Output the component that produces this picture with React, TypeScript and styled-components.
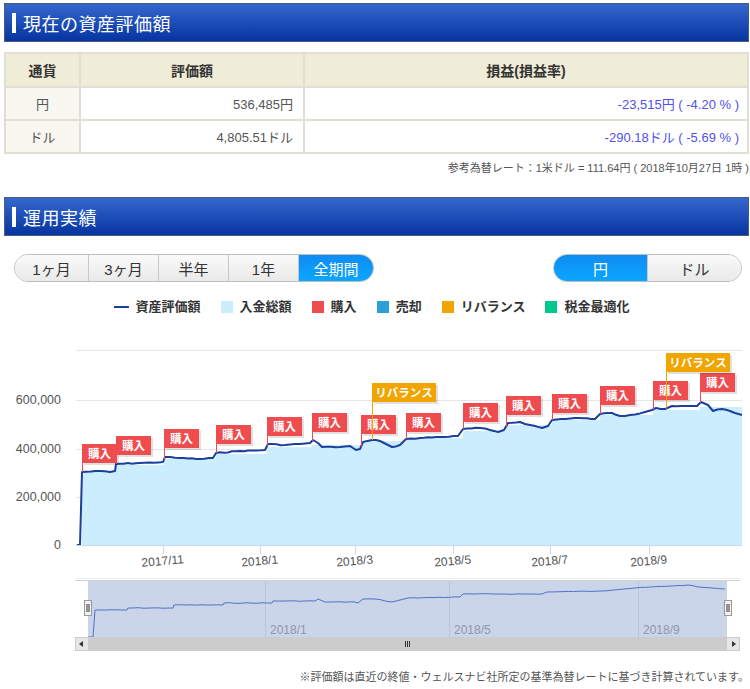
import styled, { createGlobalStyle } from 'styled-components'

const GlobalStyle = createGlobalStyle`
  body {
    margin: 0;
    background: #fff;
    font-family: 'Liberation Sans', 'Noto Sans CJK JP', sans-serif;
    color: #333;
  }
`

const Page = styled.div`
  width: 745px;
  padding: 3px 1px 0 4px;
`

const SectionHeader = styled.div`
  height: 37px;
  border: 1px solid #4d5a78;
  background: linear-gradient(#3568cf, #0634a0);
  display: flex;
  align-items: center;
  padding-left: 7px;
`

const HeaderBar = styled.span`
  width: 4px;
  height: 20px;
  background: #fff;
  margin-right: 7px;
`

const HeaderTitle = styled.h2`
  margin: 0;
  font-size: 18px;
  font-weight: normal;
  color: #fff;
  letter-spacing: 0.5px;
`

const Table = styled.table`
  margin-top: 10px;
  width: 745px;
  border-collapse: collapse;
  font-size: 13px;
`

const Th = styled.th<{ $w?: number }>`
  ${p => (p.$w ? `width: ${p.$w}px;` : '')}
  height: 32px;
  padding: 0;
  background: #efecd7;
  border: 2px solid #e1ded3;
  font-size: 14px;
  font-weight: bold;
  color: #333;
`

const Td = styled.td<{ $kind?: 'label' | 'num' | 'loss' }>`
  height: 31px;
  border: 2px solid #e1ded3;
  padding: 0 ${p => (p.$kind === 'num' ? 10 : 8)}px 0 8px;
  text-align: ${p => (p.$kind === 'label' ? 'center' : 'right')};
  background: ${p => (p.$kind === 'label' ? '#f8f8f1' : '#fff')};
  color: ${p => (p.$kind === 'loss' ? '#5050f0' : '#555')};
`

const Note = styled.div<{ $top: number }>`
  margin-top: ${p => p.$top}px;
  text-align: right;
  font-size: 11px;
  line-height: 16px;
  color: #555;
  white-space: nowrap;
`

const Spacer = styled.div<{ $h: number }>`
  height: ${p => p.$h}px;
`

const Controls = styled.div`
  margin-top: 18px;
  display: flex;
  justify-content: space-between;
  padding: 0 7px 0 10px;
`

const Segmented = styled.div`
  display: flex;
  height: 28px;
  border: 1px solid #bdbdbd;
  border-radius: 15px;
  overflow: hidden;
  box-sizing: border-box;
`

const Segment = styled.div<{ $w: number; $active?: boolean }>`
  width: ${p => p.$w}px;
  display: flex;
  align-items: center;
  justify-content: center;
  font-size: 15px;
  color: ${p => (p.$active ? '#fff' : '#333')};
  background: ${p =>
    p.$active ? 'linear-gradient(#0f8cf2, #0aa6ff)' : 'linear-gradient(#fafafa, #e9e9e9)'};
  & + & {
    border-left: 1px solid #c8c8c8;
  }
`

const Legend = styled.div`
  margin-top: 17px;
  display: flex;
  justify-content: center;
  gap: 20px;
  padding-right: 10px;
  font-size: 13px;
  font-weight: bold;
  color: #333;
  line-height: 15px;
`

const LegendItem = styled.div`
  display: flex;
  align-items: center;
  gap: 7px;
`

const Swatch = styled.span<{ $color: string; $line?: boolean }>`
  display: inline-block;
  width: ${p => (p.$line ? 15 : 12)}px;
  height: ${p => (p.$line ? 2 : 12)}px;
  background: ${p => p.$color};
`

const ChartSvg = styled.svg`
  display: block;
  font-family: 'Liberation Sans', 'Noto Sans CJK JP', sans-serif;
`

const Footer = styled.div`
  margin-top: 14px;
  text-align: right;
  font-size: 11px;
  line-height: 16px;
  color: #555;
`

// chart data in page pixel coordinates
const linePts: [number, number][] = [
  [77, 545], [80, 545], [82, 472], [100, 471], [110, 472], [115, 471], [116, 464], [140, 463],
  [163, 462], [165, 457], [180, 458], [200, 459], [213, 458], [216, 453], [240, 451], [265, 450],
  [268, 444], [285, 445], [300, 444], [310, 443], [313, 440], [318, 443], [322, 447], [340, 447],
  [350, 446], [356, 450], [360, 449], [363, 442], [372, 440], [380, 441], [388, 445], [392, 447],
  [400, 445], [406, 439], [420, 438], [440, 437], [458, 436], [463, 429], [480, 428], [490, 430],
  [498, 432], [504, 430], [508, 423], [520, 422], [530, 425], [542, 428], [548, 426], [552, 420],
  [575, 418], [595, 419], [600, 414], [612, 413], [620, 416], [630, 415], [645, 412], [652, 410],
  [656, 408], [665, 409], [672, 406], [690, 406], [697, 406], [701, 402], [708, 405], [713, 411],
  [722, 409], [730, 411], [735, 413], [742, 415]
]

const deposits: [number, number][] = [
  [82, 472], [116, 465], [164, 459], [216, 454], [267, 447], [312, 445], [361, 441], [406, 438],
  [463, 431], [506, 425], [552, 420], [600, 415], [653, 410], [700, 407]
]

const purchases: [number, number][] = [
  [82, 444], [116, 436], [164, 429], [216, 425], [267, 417], [312, 413], [361, 415], [406, 413],
  [463, 403], [506, 396], [552, 394], [600, 386], [653, 381], [700, 373]
]

const rebalances: [number, number][] = [
  [372, 383], [666, 353]
]

const navPts: [number, number][] = [
  [88, 637], [93, 637], [95, 610], [127, 610], [128, 608], [173, 608], [174, 605], [223, 605],
  [224, 603], [272, 603], [273, 601], [315, 601], [318, 599], [325, 602], [355, 602], [358, 603],
  [363, 599], [375, 599], [392, 602], [408, 598], [460, 597], [463, 594], [502, 594], [542, 594],
  [547, 592], [600, 591], [635, 588], [688, 585], [698, 587], [712, 588], [725, 589]
]

function jitter(pts: [number, number][], amp: number, step: number) {
  const out: [number, number][] = []
  let seed = 7
  const rnd = () => {
    seed = (seed * 9301 + 49297) % 233280
    return seed / 233280 - 0.5
  }
  for (let i = 0; i < pts.length - 1; i++) {
    const [x0, y0] = pts[i]
    const [x1, y1] = pts[i + 1]
    out.push([x0, y0])
    const dx = x1 - x0
    if (dx > step * 1.5 && Math.abs(y1 - y0) < 4) {
      const n = Math.floor(dx / step)
      for (let k = 1; k < n; k++) {
        const t = k / n
        out.push([x0 + dx * t, y0 + (y1 - y0) * t + rnd() * amp])
      }
    }
  }
  out.push(pts[pts.length - 1])
  return out
}

const toPath = (pts: [number, number][]) =>
  pts.map((p, i) => `${i ? 'L' : 'M'}${p[0].toFixed(1)},${p[1].toFixed(1)}`).join(' ')

const lineAt = (x: number) => {
  for (let i = 0; i < linePts.length - 1; i++) {
    const [x0, y0] = linePts[i]
    const [x1, y1] = linePts[i + 1]
    if (x >= x0 && x <= x1) return y0 + ((y1 - y0) * (x - x0)) / (x1 - x0 || 1)
  }
  return 545
}

const depositPath = () => {
  let d = 'M82,545'
  deposits.forEach(([x, y], i) => {
    d += ` L${x},${y}`
    const next = i < deposits.length - 1 ? deposits[i + 1][0] : 742
    d += ` L${next},${y}`
  })
  return d + ' L742,545 Z'
}

const Flag = ({ x, y, label, color, w }: { x: number; y: number; label: string; color: string; w: number }) => (
  <g>
    <rect x={x + 2} y={y + 2} width={w} height={19} fill="rgba(0,0,0,0.12)" />
    <line x1={x + 0.5} y1={y + 19} x2={x + 0.5} y2={lineAt(x)} stroke={color} strokeWidth={1} />
    <rect x={x} y={y} width={w} height={19} fill={color} />
    <text x={x + w / 2} y={y + 14} fill="#fff" fontSize={11.5} fontWeight="bold" textAnchor="middle">
      {label}
    </text>
  </g>
)

const yLabels: [string, number][] = [['600,000', 400], ['400,000', 449], ['200,000', 497], ['0', 545]]
const xLabels: [string, number][] = [
  ['2017/11', 163], ['2018/1', 260], ['2018/3', 355], ['2018/5', 453], ['2018/7', 550], ['2018/9', 649]
]
const navLabels: [string, number][] = [['2018/1', 265], ['2018/5', 449], ['2018/9', 638]]

const Chart = () => {
  const mainLine = jitter(linePts, 1.0, 4)
  const navLine = jitter(navPts, 0.6, 5)
  return (
    <ChartSvg width={745} height={341} viewBox="4 314 745 341">
      {[350, 400, 449, 497].map(y => (
        <line key={y} x1={76} x2={742} y1={y + 0.5} y2={y + 0.5} stroke="#e6e6e6" strokeWidth={1} />
      ))}
      {yLabels.map(([t, y]) => (
        <text key={t} x={61} y={y + 4} fontSize={12.5} fill="#555" textAnchor="end">
          {t}
        </text>
      ))}
      <path d={depositPath()} fill="#ccedfd" />
      <path d={toPath(mainLine)} fill="none" stroke="#1b3f9c" strokeWidth={2} strokeLinejoin="round" />
      <line x1={76} x2={742} y1={545.5} y2={545.5} stroke="#ccd6eb" strokeWidth={1} />
      {xLabels.map(([t, x]) => (
        <g key={t}>
          <line x1={x + 0.5} x2={x + 0.5} y1={546} y2={554} stroke="#ccd6eb" />
          <text
            x={x}
            y={565}
            fontSize={12}
            fill="#555"
            textAnchor="middle"
            transform={`rotate(-5 ${x} 565)`}
          >
            {t}
          </text>
        </g>
      ))}
      {purchases.map(([x, y]) => (
        <Flag key={x} x={x} y={y} label="購入" color="#ee4c4f" w={35} />
      ))}
      {rebalances.map(([x, y]) => (
        <Flag key={x} x={x} y={y} label="リバランス" color="#f0a500" w={64} />
      ))}
      <line x1={76} x2={742} y1={578.5} y2={578.5} stroke="#ececec" />

      {/* navigator */}
      <line x1={75} x2={740} y1={580.5} y2={580.5} stroke="#d0d0d0" />
      <rect x={88} y={581} width={639} height={56} fill="#cbd5ea" />
      {navLabels.map(([t, x]) => (
        <g key={t}>
          <line x1={x + 0.5} x2={x + 0.5} y1={581} y2={637} stroke="#b9c5de" />
          <text x={x + 5} y={634} fontSize={12} fill="#8f97a8">
            {t}
          </text>
        </g>
      ))}
      <path d={toPath(navLine)} fill="none" stroke="#4c73c9" strokeWidth={1} />
      <rect x={75} y={637} width={665} height={14} fill="#f2f2f2" />
      <rect x={88} y={637} width={639} height={14} fill="#cccccc" />
      <rect x={75.5} y={637.5} width={13} height={13} fill="#e6e6e6" stroke="#cccccc" />
      <rect x={726.5} y={637.5} width={13} height={13} fill="#e6e6e6" stroke="#cccccc" />
      <path d="M83,641 L79,644 L83,647 Z" fill="#333" />
      <path d="M732,641 L736,644 L732,647 Z" fill="#333" />
      {[405, 407, 409].map(x => (
        <line key={x} x1={x + 0.5} x2={x + 0.5} y1={641} y2={647} stroke="#333" />
      ))}
      {[84.5, 724.5].map(x => (
        <g key={x}>
          <rect x={x} y={600.5} width={7} height={15} fill="#f2f2f2" stroke="#999" />
          <line x1={x + 2.5} x2={x + 2.5} y1={604} y2={612} stroke="#333" />
          <line x1={x + 4.5} x2={x + 4.5} y1={604} y2={612} stroke="#333" />
        </g>
      ))}
    </ChartSvg>
  )
}

const legendItems: [string, string, boolean?][] = [
  ['資産評価額', '#1b3f9c', true],
  ['入金総額', '#ccedfd'],
  ['購入', '#ee4c4f'],
  ['売却', '#2aa0d6'],
  ['リバランス', '#f0a500'],
  ['税金最適化', '#00c98e']
]

const App = () => {
  return (
    <Page>
      <GlobalStyle />
      <SectionHeader>
        <HeaderBar />
        <HeaderTitle>現在の資産評価額</HeaderTitle>
      </SectionHeader>
      <Table>
        <thead>
          <tr>
            <Th $w={73}>通貨</Th>
            <Th $w={222}>評価額</Th>
            <Th>損益(損益率)</Th>
          </tr>
        </thead>
        <tbody>
          <tr>
            <Td $kind="label">円</Td>
            <Td $kind="num">536,485円</Td>
            <Td $kind="loss">-23,515円 ( -4.20 % )</Td>
          </tr>
          <tr>
            <Td $kind="label">ドル</Td>
            <Td $kind="num">4,805.51ドル</Td>
            <Td $kind="loss">-290.18ドル ( -5.69 % )</Td>
          </tr>
        </tbody>
      </Table>
      <Note $top={6}>参考為替レート：1米ドル = 111.64円 ( 2018年10月27日 1時 )</Note>
      <Spacer $h={21} />
      <SectionHeader>
        <HeaderBar />
        <HeaderTitle>運用実績</HeaderTitle>
      </SectionHeader>
      <Controls>
        <Segmented>
          <Segment $w={73}>1ヶ月</Segment>
          <Segment $w={69}>3ヶ月</Segment>
          <Segment $w={69}>半年</Segment>
          <Segment $w={69}>1年</Segment>
          <Segment $w={74} $active>全期間</Segment>
        </Segmented>
        <Segmented>
          <Segment $w={93} $active>円</Segment>
          <Segment $w={93}>ドル</Segment>
        </Segmented>
      </Controls>
      <Legend>
        {legendItems.map(([label, color, line]) => (
          <LegendItem key={label}>
            <Swatch $color={color} $line={line} />
            {label}
          </LegendItem>
        ))}
      </Legend>
      <Chart />
      <Footer>※評価額は直近の終値・ウェルスナビ社所定の基準為替レートに基づき計算されています。</Footer>
    </Page>
  )
}

export default App
